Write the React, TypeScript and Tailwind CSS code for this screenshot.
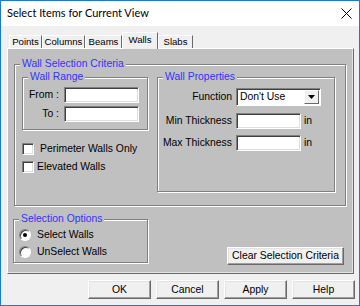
import React from "react";

const font = { fontFamily: '"Liberation Sans", Arial, sans-serif' };

function Group({
  label,
  className,
  children,
}: {
  label: string;
  className: string;
  children?: React.ReactNode;
}) {
  return (
    <div
      className={
        "relative border border-[#808080] shadow-[inset_1px_1px_0_#ffffff,1px_1px_0_#ffffff] " +
        className
      }
    >
      <span className="absolute left-[5px] top-[-8px] bg-[#c0c0c0] px-[2px] text-[10.4px] leading-[13px] text-[#3333ff]">
        {label}
      </span>
      {children}
    </div>
  );
}

function Input({ className }: { className: string }) {
  return (
    <div
      className={
        "bg-white border border-t-[#808080] border-l-[#808080] border-b-white border-r-white shadow-[inset_1px_1px_0_#404040,inset_-1px_-1px_0_#dfdfdf] " +
        className
      }
    />
  );
}

function Checkbox() {
  return (
    <div className="w-[12px] h-[12px] bg-white border border-t-[#808080] border-l-[#808080] border-b-white border-r-white shadow-[inset_1px_1px_0_#404040,inset_-1px_-1px_0_#dfdfdf]" />
  );
}

function Radio({ checked }: { checked?: boolean }) {
  return (
    <div className="w-[12px] h-[12px] rounded-full bg-white border border-t-[#808080] border-l-[#808080] border-b-white border-r-white shadow-[inset_1px_1px_0_#404040] flex items-center justify-center">
      {checked ? <div className="w-[4px] h-[4px] rounded-full bg-black" /> : null}
    </div>
  );
}

function Button({ label, className }: { label: string; className: string }) {
  return (
    <div
      className={
        "flex items-center justify-center bg-[#f0f0f0] border border-t-white border-l-white border-b-[#696969] border-r-[#696969] shadow-[inset_-1px_-1px_0_#a0a0a0,inset_1px_1px_0_#e3e3e3] text-[10.4px] text-black " +
        className
      }
    >
      {label}
    </div>
  );
}

function Tab({ label, selected, w }: { label: string; selected?: boolean; w: string }) {
  return (
    <div
      className={
        "flex items-center justify-center bg-[#f0f0f0] border-t border-l border-t-white border-l-white border-r border-r-[#696969] text-[9.6px] text-black " +
        w +
        (selected ? " h-[17px] pb-[2px] relative z-10 -mb-[1px]" : " h-[13px]")
      }
    >
      {label}
    </div>
  );
}

export default function App() {
  return (
    <div
      className="w-[360px] h-[306px] border border-[#1a7ad2] bg-[#f0f0f0] flex flex-col overflow-hidden text-black"
      style={font}
    >
      {/* Title bar */}
      <div className="h-[25px] bg-white flex items-center justify-between pl-[6px] pr-[6px]">
        <span className="text-[11px]" style={{ fontFamily: 'Lato, "Liberation Sans", sans-serif' }}>
          Select Items for Current View
        </span>
        <svg width="11" height="11" viewBox="0 0 11 11" className="mr-[1px]">
          <path d="M0.5 0.5 L10.5 10.5 M10.5 0.5 L0.5 10.5" stroke="#000" strokeWidth="1" />
        </svg>
      </div>

      {/* Tabs */}
      <div className="mt-[6px] h-[16px] flex items-end pl-[8px]">
        <Tab label="Points" w="w-[33px]" />
        <Tab label="Columns" w="w-[43px]" />
        <Tab label="Beams" w="w-[37px]" />
        <Tab label="Walls" w="w-[36px]" selected />
        <Tab label="Slabs" w="w-[35px]" />
      </div>

      {/* Panel */}
      <div className="ml-[6px] w-[347px] h-[226px] bg-[#c0c0c0] border border-t-white border-l-white border-b-[#696969] border-r-[#696969] shadow-[inset_-1px_-1px_0_#e3e3e3] flex flex-col text-[10.4px]">
        <Group label="Wall Selection Criteria" className="ml-[6px] mt-[15px] w-[332px] h-[142px]">
          <div className="flex pl-[7px] pt-[12px]">
            <div className="flex flex-col">
              <Group label="Wall Range" className="w-[126px] h-[53px]">
                <div className="flex flex-col pt-[9px] gap-[3px]">
                  <div className="flex items-center">
                    <span className="w-[36px] text-right">From :</span>
                    <Input className="ml-[5px] w-[75px] h-[16px]" />
                  </div>
                  <div className="flex items-center">
                    <span className="w-[36px] text-right">To :</span>
                    <Input className="ml-[5px] w-[75px] h-[16px]" />
                  </div>
                </div>
              </Group>
              <div className="mt-[12px] flex items-center h-[13px]">
                <Checkbox />
                <span className="ml-[6px]">Perimeter Walls Only</span>
              </div>
              <div className="mt-[5px] flex items-center h-[13px]">
                <Checkbox />
                <span className="ml-[3px]">Elevated Walls</span>
              </div>
            </div>
            <Group label="Wall Properties" className="ml-[9px] w-[178px] h-[115px]">
              <div className="flex flex-col pt-[10px]">
                <div className="flex items-center">
                  <span className="w-[74px] text-right">Function</span>
                  <div className="ml-[4px] w-[85px] h-[18px] bg-white border border-t-[#808080] border-l-[#808080] border-b-white border-r-white shadow-[inset_1px_1px_0_#404040] flex items-center">
                    <span className="pl-[3px] flex-1">Don't Use</span>
                    <div className="w-[15px] h-[14px] mr-[1px] bg-[#f0f0f0] border border-t-white border-l-white border-b-[#696969] border-r-[#696969] flex items-center justify-center">
                      <svg width="7" height="4" viewBox="0 0 7 4">
                        <path d="M0 0 H7 L3.5 4 Z" fill="#000" />
                      </svg>
                    </div>
                  </div>
                </div>
                <div className="flex items-center mt-[7px]">
                  <span className="w-[74px] text-right">Min Thickness</span>
                  <Input className="ml-[4px] w-[65px] h-[16px]" />
                  <span className="ml-[3px]">in</span>
                </div>
                <div className="flex items-center mt-[6px]">
                  <span className="w-[74px] text-right">Max Thickness</span>
                  <Input className="ml-[4px] w-[65px] h-[16px]" />
                  <span className="ml-[3px]">in</span>
                </div>
              </div>
            </Group>
          </div>
        </Group>

        <div className="flex mt-[13px]">
          <Group label="Selection Options" className="ml-[5px] w-[135px] h-[44px]">
            <div className="flex flex-col pl-[5px] pt-[9px] gap-[5px]">
              <div className="flex items-center h-[12px]">
                <Radio checked />
                <span className="ml-[6px]">Select Walls</span>
              </div>
              <div className="flex items-center h-[12px]">
                <Radio />
                <span className="ml-[6px]">UnSelect Walls</span>
              </div>
            </div>
          </Group>
          <Button label="Clear Selection Criteria" className="ml-[79px] mt-[28px] w-[117px] h-[18px]" />
        </div>
      </div>

      {/* Bottom buttons */}
      <div className="mt-[6px] pl-[87px] flex gap-[5px]">
        <Button label="OK" className="w-[63px] h-[19px]" />
        <Button label="Cancel" className="w-[63px] h-[19px]" />
        <Button label="Apply" className="w-[63px] h-[19px]" />
        <Button label="Help" className="w-[63px] h-[19px]" />
      </div>
    </div>
  );
}
